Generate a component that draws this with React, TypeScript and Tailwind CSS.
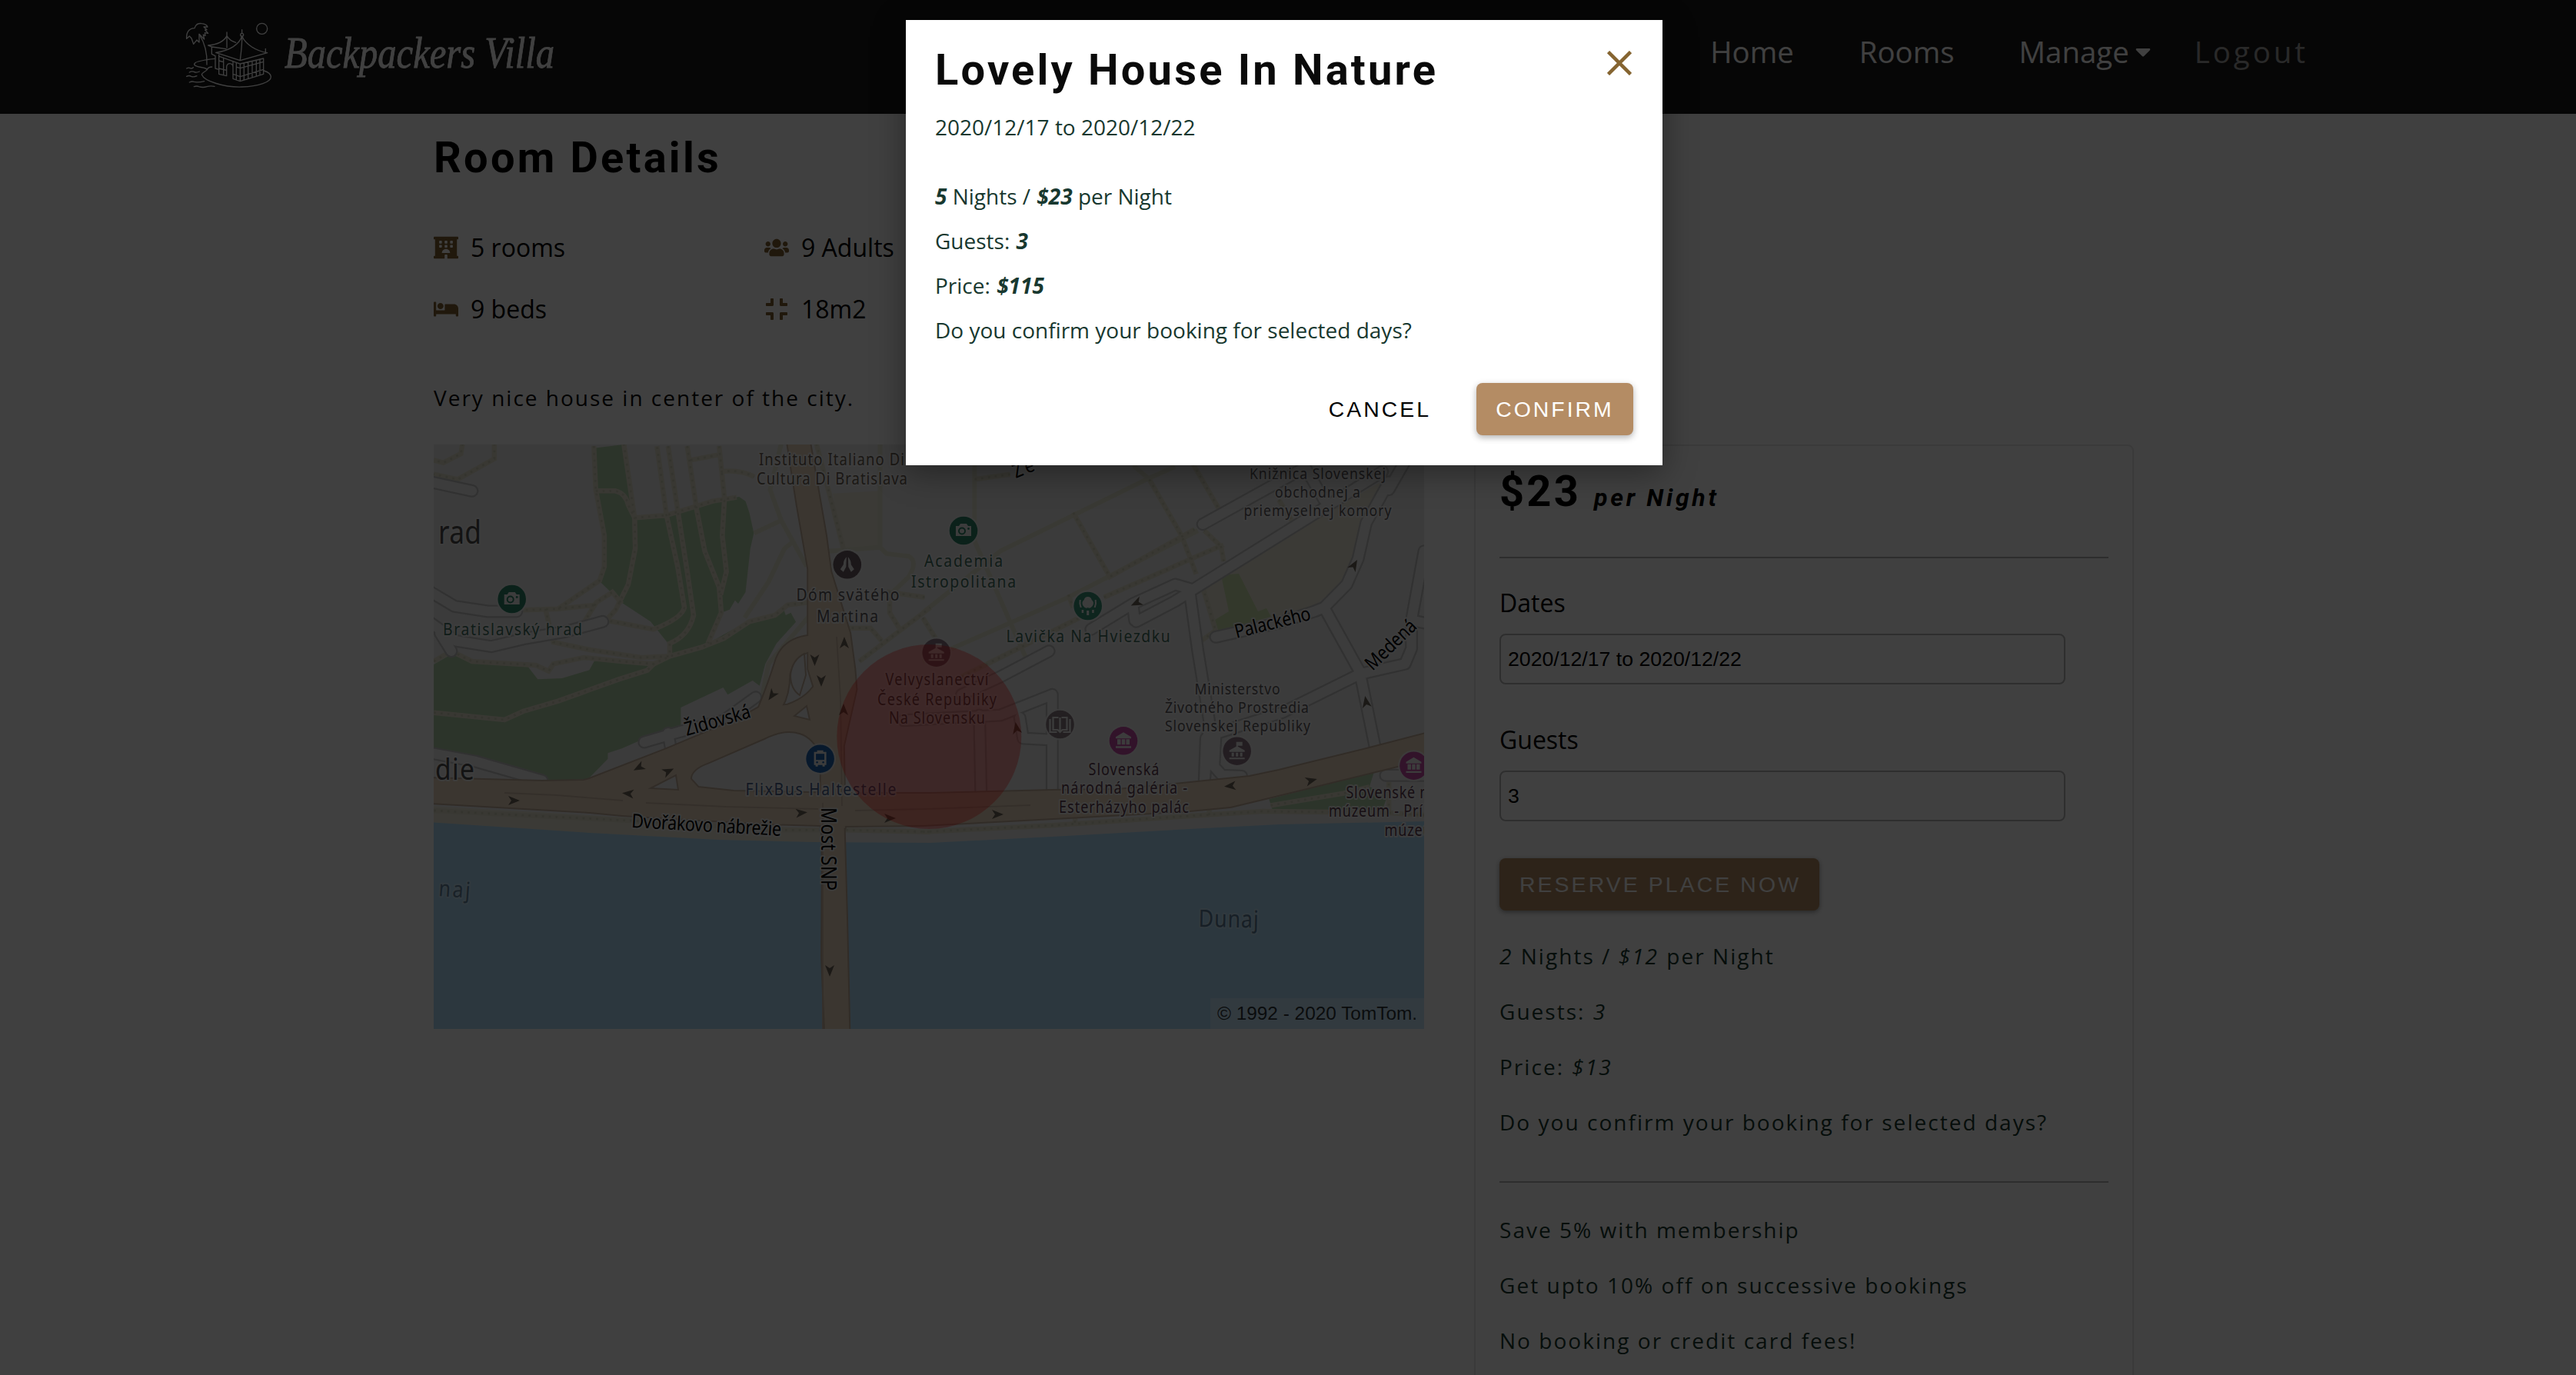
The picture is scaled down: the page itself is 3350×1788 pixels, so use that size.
import React from "react";
import { FaBed, FaCaretDown, FaCompress, FaHotel, FaUsers } from "react-icons/fa";

/* ---------- logo ---------- */

function VillaLogo() {
  return (
    <svg
      viewBox="60 85 345 260"
      className="h-[86.7px] w-[115px] shrink-0"
      fill="none"
      stroke="#fff"
      strokeWidth="4"
      strokeLinecap="round"
      strokeLinejoin="round"
    >
      <circle cx="362" cy="113" r="21" />
      <path d="M68 152 C66 128 76 112 99 111 C103 97 114 91 127 93 C139 94 147 99 150 106 L135 106 L147 117 L140 118 L152 131 L139 129 L141 140 L133 136 L137 154 L117 134 L117 166 L108 157 L95 173 L87 150 L79 142 Z" />
      <path d="M118 136 C137 165 149 205 147 253" />
      <path d="M225 127 V187 M225 141 C214 162 190 175 152 178 L168 184 L222 192 M225 141 C233 154 245 163 260 167 M166 184 V212 L180 219 V268 L194 272" />
      <path d="M284 117 V131 M284 142 C273 175 236 199 182 206 L277 237 L383 207 C338 199 299 175 284 142 C285 176 280 208 277 235 M376 191 V205" />
      <circle cx="284" cy="137" r="6" />
      <path d="M194 215 V290 L224 297 V262 C224 244 249 244 249 264 V308 L277 318 L368 290 V229 L277 250 L194 220 M277 250 V318 M262 247 V313 M249 240 V262 M212 226 V294 M194 238 L212 243 M194 268 L224 275 M249 290 L277 300 L368 272 M262 262 L277 267 L368 242 M292 247 V313 M308 244 V308 M324 240 V303 M340 236 V298 M354 232 V293" />
      <path d="M178 230 C140 234 97 241 98 252 C99 266 146 261 148 273 C139 283 127 284 127 292 C137 318 215 342 283 340 C350 338 398 320 397 300 C396 289 383 281 370 277 M148 273 C151 265 158 262 167 262" />
      <path d="M68 268 Q76 263 82 267 Q88 270 94 264 M79 283 Q88 277 97 281 Q106 286 118 280 M68 299 Q78 294 86 299 Q96 303 108 297 M79 322 Q89 317 97 320 Q112 324 137 318 M97 339 Q108 335 116 339 Q132 344 147 339 Q160 335 177 338" />
    </svg>
  );
}

/* ---------- map ---------- */

// Each map tile is drawn in its own grid and placed with one of these transforms.
const TILE_NW = "translate(-4 -8) scale(0.41454 0.33333)";
const TILE_NE = "translate(636 -8) scale(0.4209 0.33333)";
const TILE_SW = "translate(-4 382) scale(0.41454 0.33333)";
const TILE_SE = "translate(636 382) scale(0.4209 0.33333)";

type TilePath = [string, string];

const parks: TilePath[] = [
  [TILE_NW, "M512 38 L606 24 L630 240 L640 318 L740 305 L885 245 L968 228 L988 245 L1000 290 L1014 370 L1003 430 L988 600 L965 645 L955 632 L938 668 L912 680 L868 800 L750 850 L748 805 L690 715 L598 640 L528 555 L550 490 L550 380 L528 290 L518 200 Z"],
  [TILE_NW, "M10 882 L65 842 L130 872 L305 890 L336 940 L412 936 L498 904 L514 868 L690 886 L870 800 L985 720 L1070 700 L1108 668 L1114 690 L1130 680 L1146 716 L1085 800 L1050 880 L1032 965 L1010 945 L932 1000 L918 972 L785 1050 L785 1130 L655 1180 L600 1210 L556 1228 L556 1250 L495 1328 L350 1338 L140 1270 L10 1230 Z"],
  [TILE_SE, "M1070 238 L1395 130 L1380 190 L1440 210 L1420 280 L1080 278 Z"],
];

const lawns: TilePath[] = [
  [TILE_NW, "M1262 215 L1410 205 L1410 420 L1290 440 Z"],
  [TILE_NE, "M860 570 L1200 330 L1415 170 L1370 330 L1325 470 L1290 570 L1210 655 L1080 700 L905 750 Z"],
];

const footpaths: TilePath[] = [
  [TILE_NW, "M100 20 L95 60 L40 95 L10 85 M200 20 L200 80 L85 160 L10 140"],
  [TILE_NW, "M512 30 L518 200 L545 380 L545 500 L530 555 L400 665 L290 670"],
  [TILE_NW, "M518 205 L580 205 Q612 215 620 260 L640 310 L740 300 L885 245 L960 230 M606 20 L640 310 L642 430 L620 570 L580 670 L550 710 L700 745 Q790 700 796 660 L775 500 L740 300 L710 30"],
  [TILE_NW, "M745 30 L775 280 L805 520 L825 690 Q810 770 750 800 L750 850 M805 30 L835 280 L860 440 L905 580 L912 680 L870 800 M905 30 L922 235 L915 380 L928 520 L910 610 M815 85 L900 65 M910 130 Q970 120 1015 150"],
  [TILE_NW, "M10 870 L65 830 L130 870 L330 885 L370 908 L385 880 L480 855 L600 870 L700 880 L750 850 L850 815 L920 780 L1000 715 L1080 690 L1120 650 L1185 640"],
  [TILE_NW, "M360 665 L385 795 L500 825 L660 855 L750 850 M480 720 L520 640 L570 600 L600 645 M400 665 L520 650"],
  [TILE_NW, "M10 1070 L232 1098 L290 1065 L400 1025 L590 940 L680 905 L700 880"],
  [TILE_NW, "M1210 20 L1260 260 L1295 430"],
  [TILE_NW, "M1550 620 L1440 600 L1440 680 L1470 740 M1300 740 L1380 740 L1415 790 M1345 870 L1568 660"],
  [TILE_NE, "M160 160 L270 140 M835 100 L915 275 M465 290 L578 540 L840 355 M700 160 L800 380 L845 530 M560 620 L920 420 L870 360 M930 480 L920 410 M865 580 L905 750 L860 790 M450 610 L465 660 M0 700 L40 780"],
  [TILE_NE, "M1100 240 L1140 320 M120 930 L500 690"],
  [TILE_SW, "M10 282 L250 298 L640 322 L1100 358 L1300 358 L1568 365"],
  [TILE_SE, "M0 365 L400 340 L800 305 L1050 285 L1430 290 L1549 300 M470 330 L472 300 M885 300 L885 270 M1075 262 L1300 215 L1380 190 M1440 290 L1440 170"],
];

const plainPaths: TilePath[] = [
  [TILE_NW, "M1100 20 L1065 200 L1100 320 L1180 500 M1015 370 L1100 320 M1135 405 L1110 430 L1060 560 L985 700 M1410 20 L1410 420 M1250 440 L1410 425 L1430 450 L1500 460 Q1530 480 1500 540 L1450 600 M1190 690 L1060 880 L1040 1010"],
  [TILE_NE, "M160 100 L160 400 L320 860 M0 680 L240 440 L700 155 L780 110 M650 105 L700 160 M0 870 L450 620 L850 360"],
];

const streets: TilePath[] = [
  [TILE_NW, "M0 170 L130 205"],
  [TILE_NW, "M0 600 L75 655 L180 675 L270 675"],
  [TILE_NW, "M0 720 L80 790 L190 812 L300 780 L420 755 L540 715 M30 760 L65 830"],
  [TILE_NE, "M865 335 L1180 115 M835 590 L1420 130 M1440 200 L1490 90 M1180 110 L1240 240 M835 590 L780 570 L650 645 L520 745 M825 600 L780 635 L660 715 M650 660 L655 710"],
  [TILE_NE, "M825 600 L850 830 L885 1100 L870 1350 M905 775 L1100 720 L1210 675 L1240 660 L1310 570 L1345 470 L1370 330 L1440 170 M1240 660 L1350 910 L1400 1220 M1350 920 L1110 1070 L910 1150 M1350 920 L1490 880 L1510 820 L1510 710 L1549 720 M1510 710 L1549 440"],
  [TILE_NE, "M390 830 L240 930 L120 1000 M400 1000 L240 1080 L-60 1100 M400 1000 L400 1380 M300 1090 L310 1170 L385 1175 M175 1080 L180 1380"],
  [TILE_SE, "M875 0 L870 170 M905 -5 L900 110 L925 145 L985 148 M1430 145 L1549 145"],
  [TILE_NW, "M670 1185 L780 1145 L920 1100 L1020 1010 M745 1150 L755 1220"],
  [TILE_SW, "M10 60 L140 90 L350 165"],
];

const avenues: TilePath[] = [
  [TILE_NW, "M1120 20 L1150 260 L1185 510 L1185 900 L1205 980 L1225 1250 L1225 1520 L1300 1520 L1295 1200 L1335 980 L1330 900 L1315 760 L1280 620 L1255 520 L1240 380 L1215 200 L1190 20 Z"],
  [TILE_SW, "M1225 190 L1230 500 L1228 850 L1237 1140 L1313 1140 L1305 700 L1297 350 L1297 190 Z"],
  [TILE_NW, "M1190 770 Q1110 780 1085 860 Q1060 960 1030 1050 L1030 1110 L1100 1050 Q1125 1000 1125 920 Q1140 850 1190 830 Z"],
  [TILE_NW, "M1215 940 Q1190 1010 1120 1040 L1030 1050 L970 1092 L740 1212 L500 1328 L480 1400 L815 1400 L815 1330 Q815 1290 870 1265 L1050 1168 Q1110 1130 1160 1150 Q1200 1165 1230 1240 L1240 1000 Z"],
  [
    "",
    "M-6 434 L141 438 L195 437 L203 435 L334 435 L344 446 L390 451 L535 454 L646 454 L804 450 L889 449 L964 442 L1061 432 L1099 424 L1217 395 L1294 375 L1294 408 L1225 425 L1082 460 L1036 471 L973 477 L825 485 L636 495 L535 496 L431 493 L245 482 L203 478 L-6 466 Z",
  ],
];

const arrows: [number, number, number][] = [
  [534, 258, -90], [495.5, 280, 90], [504, 307, 90], [440, 326, 125], [533, 345, -90],
  [914, 206, 155], [1197, 157, -60], [1212.6, 335, -100], [758, 369, -100],
  [267, 420, 152], [305, 425, -25], [253, 454, 185], [104, 463, 0], [478, 479, -5],
  [593, 486, 0], [515, 684, 90], [1036, 444, 175], [1141, 437, -15], [733, 481, 0],
];

interface Label {
  text: string;
  x: number;
  y: number;
  w: number;
  size: number;
  fill: string;
  rotate?: number;
}

const GREEN = "#42705f";
const GREY = "#5e5a5e";
const PLUM = "#5c3c50";

// Horizontal squeeze that turns the regular face into a condensed one.
const CONDENSE = 0.86;

const labels: Label[] = [
  { text: "rad", x: 6, y: 129, w: 56, size: 41, fill: "#4c4c4c" },
  { text: "die", x: 2, y: 436, w: 51, size: 39, fill: "#4c4c4c" },
  { text: "Instituto Italiano Di", x: 423, y: 27, w: 189, size: 21.5, fill: "#6c6054" },
  { text: "Cultura Di Bratislava", x: 420, y: 52, w: 196, size: 21.5, fill: "#6c6054" },
  { text: "Bratislavský hrad", x: 12, y: 248, w: 181, size: 22.5, fill: GREEN },
  { text: "Dóm svätého", x: 471.5, y: 203, w: 134, size: 22.5, fill: GREY },
  { text: "Martina", x: 498, y: 231, w: 80, size: 22.5, fill: GREY },
  { text: "Academia", x: 638, y: 159, w: 102, size: 22.5, fill: GREEN },
  { text: "Istropolitana", x: 621, y: 186, w: 136, size: 22.5, fill: GREEN },
  { text: "Lavička Na Hviezdku", x: 744.6, y: 257, w: 213, size: 22.5, fill: GREEN },
  { text: "Knižnica Slovenskej", x: 1061, y: 44.7, w: 177, size: 20.5, fill: GREY },
  { text: "obchodnej a", x: 1094, y: 69, w: 111, size: 20.5, fill: GREY },
  { text: "priemyselnej komory", x: 1053.5, y: 93, w: 192, size: 20.5, fill: GREY },
  { text: "Ministerstvo", x: 989.6, y: 325, w: 111, size: 20.5, fill: GREY },
  { text: "Životného Prostredia", x: 951, y: 349, w: 187, size: 20.5, fill: GREY },
  { text: "Slovenskej Republiky", x: 951, y: 373, w: 189, size: 20.5, fill: GREY },
  { text: "Velvyslanectví", x: 587.5, y: 313, w: 134, size: 21, fill: GREY },
  { text: "České Republiky", x: 577, y: 338.7, w: 155, size: 21, fill: GREY },
  { text: "Na Slovensku", x: 592, y: 363, w: 125, size: 21, fill: GREY },
  { text: "Slovenská", x: 851.5, y: 429.7, w: 92, size: 21, fill: PLUM },
  { text: "národná galéria -", x: 816, y: 453.7, w: 164, size: 21, fill: PLUM },
  { text: "Esterházyho palác", x: 813, y: 478.7, w: 169, size: 21, fill: PLUM },
  { text: "Slovenské n", x: 1186.5, y: 460, w: 107, size: 21, fill: PLUM },
  { text: "múzeum - Prí", x: 1164, y: 484, w: 122, size: 21, fill: PLUM },
  { text: "múzeu", x: 1236.6, y: 508.7, w: 61, size: 21, fill: PLUM },
  { text: "FlixBus Haltestelle", x: 405.5, y: 456, w: 196, size: 22.5, fill: "#48608c" },
  { text: "naj", x: 6, y: 587, w: 41, size: 29, fill: "#64829c", rotate: 4 },
  { text: "Dunaj", x: 994.6, y: 627, w: 78, size: 31, fill: "#5c7c98", rotate: 1 },
  { text: "Ze", x: 757, y: 44, w: 28, size: 25, fill: "#000", rotate: -22 },
  { text: "Židovská", x: 329, y: 379, w: 88, size: 25, fill: "#000", rotate: -16 },
  { text: "Palackého", x: 1044, y: 252, w: 101, size: 25, fill: "#000", rotate: -14 },
  { text: "Medená", x: 1221, y: 295, w: 82, size: 25, fill: "#000", rotate: -44 },
  { text: "Dvořákovo nábrežie", x: 257, y: 498, w: 195, size: 25, fill: "#000", rotate: 3.2 },
  { text: "Most SNP", x: 504, y: 472, w: 108, size: 27, fill: "#000", rotate: 90 },
];

type PinKind = "camera" | "church" | "tree" | "gov" | "museum" | "book" | "bus";

const pins: { x: number; y: number; fill: string; kind: PinKind }[] = [
  { x: 101.7, y: 201, fill: "#2c8468", kind: "camera" },
  { x: 689, y: 112, fill: "#2c8468", kind: "camera" },
  { x: 850.7, y: 210, fill: "#38947a", kind: "tree" },
  { x: 537.8, y: 156.3, fill: "#6c5c64", kind: "church" },
  { x: 653.7, y: 270.7, fill: "#8c7484", kind: "gov" },
  { x: 814.5, y: 364, fill: "#8c7c84", kind: "book" },
  { x: 1044.7, y: 398.7, fill: "#8c7484", kind: "gov" },
  { x: 897, y: 385.3, fill: "#c84ca8", kind: "museum" },
  { x: 1274.5, y: 417.7, fill: "#c84ca8", kind: "museum" },
  { x: 502.6, y: 408.7, fill: "#2064b0", kind: "bus" },
];

function PinGlyph({ kind, hole }: { kind: PinKind; hole: string }) {
  switch (kind) {
    case "camera":
      return (
        <g>
          <path d="M-10 -6 h4 l2 -3 h8 l2 3 h4 v13 h-20 z" />
          <circle cx="-2" cy="0.5" r="4" fill="none" stroke={hole} strokeWidth="2" />
          <circle cx="6.5" cy="-2.5" r="1.4" fill={hole} />
        </g>
      );
    case "church":
      return (
        <g>
          <path d="M-1 -10 Q-5 -6 -5 0 L-9 6 L-5 9.5 L-1.5 3 Z M1 -10 Q5 -6 5 0 L9 6 L5 9.5 L1.5 3 Z" />
          <path d="M0 -5 V4" stroke={hole} strokeWidth="1.4" />
        </g>
      );
    case "tree":
      return (
        <path d="M-6 0 q-3 -5 1 -8 q1 -4 5 -4 q4 0 5 4 q4 3 1 8 q-3 4 -6 2 q-3 2 -6 -2 z M-1.5 6 h3 v6 h-3 z M-8 5 h2.5 v4 h-2.5 z M5.5 5 h2.5 v4 h-2.5 z M-11 -8 h2 q-1 5 1 10 h-2 q-2 -5 -1 -10 z M11 -8 h-2 q1 5 -1 10 h2 q2 -5 1 -10 z" />
      );
    case "gov":
      return (
        <path d="M-10 -1 L-1 -6 V-12 H7 V-7 H1 V-6 L10 -1 V1 H-10 Z M-7 2 h3 v5 h-3 z M-1.5 2 h3 v5 h-3 z M4 2 h3 v5 h-3 z M-10 8.5 h20 v2 h-20 z" />
      );
    case "museum":
      return (
        <path d="M-10 -5 L0 -11 L10 -5 V-3 H-10 Z M-8 -2 h4.5 v7 h-4.5 z M-2.2 -2 h4.4 v7 h-4.4 z M3.5 -2 h4.5 v7 h-4.5 z M-10 7 h20 v2.4 h-20 z" />
      );
    case "book":
      return (
        <path
          fill="none"
          stroke="#f0f0f0"
          strokeWidth="2.2"
          d="M0 8 V-9 M-2 -9 H-9 V7 H-3 L0 10 L3 7 H9 V-9 H2 M-13 -7 V10 H-4 M13 -7 V10 H4"
        />
      );
    case "bus":
      return (
        <g>
          <path d="M-4 -11 h8 v2 h4 v17 h-2 v2 h-3 v-2 h-6 v2 h-3 v-2 h-2 v-17 h4 z" />
          <path d="M-5.5 -6.5 h11 v8 h-11 z" fill={hole} />
          <circle cx="-4" cy="4.5" r="1.3" fill={hole} />
          <circle cx="4" cy="4.5" r="1.3" fill={hole} />
        </g>
      );
  }
}

function Paths({ items, ...rest }: { items: TilePath[] } & React.SVGProps<SVGPathElement>) {
  return (
    <>
      {items.map(([t, d], i) => (
        <path key={i} d={d} transform={t || undefined} vectorEffect="non-scaling-stroke" {...rest} />
      ))}
    </>
  );
}

function CityMap() {
  return (
    <div className="relative h-[760px] w-[1288px] shrink-0 overflow-hidden">
      <svg viewBox="0 0 1288 760" className="block h-[760px] w-[1288px]">
        <rect width="1288" height="760" fill="#ebebeb" />
        <Paths items={parks} fill="#b0d0a6" />
        <Paths items={lawns} fill="#ebe6d6" />
        <path d="M1024 170 L1047 168 L1072 217 L1083 213 L1089 224 L1020 242 L1016 228 L1034 217 Z" fill="#cbe0ac" />
        <path d="M-6 470 L203 482 L535 502 L535 520 L203 508 L-6 494 Z" fill="#ebe8d8" />
        <path d="M-6 491 L203 505 L370 514 L493 517 L646 518 L804 510 L1002 499 L1099 494 L1294 490 V766 H-6 Z" fill="#b0dcf8" />
        <Paths items={plainPaths} fill="none" stroke="#e4e4ce" strokeWidth={6} />
        <Paths items={footpaths} fill="none" stroke="#e2e0cc" strokeWidth={6.5} />
        <Paths items={footpaths} fill="none" stroke="#cfcdb8" strokeWidth={2.8} strokeDasharray="2.8 6" />
        <Paths items={streets} fill="none" stroke="#c4c4c4" strokeWidth={17} strokeLinecap="round" strokeLinejoin="round" />
        <Paths items={streets} fill="none" stroke="#eeeeee" strokeWidth={12.5} strokeLinecap="round" strokeLinejoin="round" />
        <Paths items={avenues} fill="none" stroke="#c4b09c" strokeWidth={4} strokeLinejoin="round" />
        <Paths items={avenues} fill="#ecd6be" />
        <path d="M282 447 L315 430 L318 449 Z M469 353 L485 340 L489 358 Z M464 300 Q466 280 482 272 L484 300 L476 326 Q464 318 464 300 Z" fill="#ebebeb" stroke="#c4b09c" strokeWidth="2" />
        <path d="M92 453 L160 456 L246 463 M276 466 L380 471 L500 474 M548 476 L640 474 L776 469 M506 466 V760 M524 250 L529 330 L531 470" fill="none" stroke="#d0bca8" strokeWidth="1.8" />
        <g fill="#6c6459">
          {arrows.map(([x, y, a], i) => (
            <path key={i} d="M-7 -6 L8 0 L-7 6 L-3 0 Z" transform={`translate(${x} ${y}) rotate(${a})`} />
          ))}
        </g>
        <g fontFamily='"Noto Sans", sans-serif'>
          {labels.map((l) => (
            <text
              key={l.text + l.x}
              transform={`translate(${l.x} ${l.y}) rotate(${l.rotate ?? 0}) scale(${CONDENSE} 1)`}
              fontSize={l.size}
              fill={l.fill}
              stroke="#f6f6f6"
              strokeOpacity={l.text.endsWith("naj") ? 0.3 : 0.9}
              strokeWidth="4"
              strokeLinejoin="round"
              paintOrder="stroke"
              textLength={l.w / CONDENSE}
              lengthAdjust="spacing"
            >
              {l.text}
            </text>
          ))}
        </g>
        {pins.map((p, i) => (
          <g key={i} transform={`translate(${p.x} ${p.y})`} fill="#f0f0f0">
            <circle r="20.5" fillOpacity="0.8" />
            <circle r="18.3" fill={p.fill} />
            <PinGlyph kind={p.kind} hole={p.fill} />
          </g>
        ))}
        <circle cx="644.3" cy="380" r="120" fill="#ff0000" fillOpacity="0.33" />
      </svg>
      <div className="absolute right-0 bottom-0 flex h-10 w-[278px] items-center justify-center bg-white/30 font-['Liberation_Sans',sans-serif] text-[24.4px] whitespace-nowrap text-black/80">
        © 1992 - 2020 TomTom.
      </div>
    </div>
  );
}

/* ---------- page ---------- */

function Feature({ icon, children }: { icon: React.ReactNode; children: React.ReactNode }) {
  return (
    <div className="flex h-10 items-center gap-4 text-[32px] leading-10 text-black">
      <span className="text-[#806232]">{icon}</span>
      <span>{children}</span>
    </div>
  );
}

function Field({ label, value }: { label: string; value: string }) {
  return (
    <div>
      <div className="text-[32px] leading-[44px] text-black">{label}</div>
      <div className="mt-[18px] flex h-[66px] w-[736px] items-center rounded-[8px] border-2 border-[#b8b8b8] pl-[9px] font-['Liberation_Sans',sans-serif] text-[26.67px] text-black">
        {value}
      </div>
    </div>
  );
}

function Header() {
  return (
    <header className="flex h-[148px] bg-[#1a1a1a] pl-[240px] text-white">
      <div className="flex pt-[28px]">
        <VillaLogo />
        <svg className="ml-[13px] h-[90px] w-[370px] overflow-visible" viewBox="0 0 370 90">
          <text
            x="2"
            y="60"
            fill="#fff"
            stroke="#fff"
            strokeWidth="0.8"
            fontFamily='"Liberation Serif", serif'
            fontStyle="italic"
            fontSize="56"
            textLength="351"
            lengthAdjust="spacingAndGlyphs"
          >
            Backpackers Villa
          </text>
        </svg>
      </div>
      <nav className="mr-[348px] ml-auto flex h-[134px] items-center text-[38.4px] leading-none">
        <a className="mr-[85px]">Home</a>
        <a className="mr-[84px]">Rooms</a>
        <a className="flex items-center">
          Manage
          <FaCaretDown className="ml-[2px] size-[32px]" />
        </a>
        <a className="ml-[51px] tracking-[4px] text-[#a4a4a4]">Logout</a>
      </nav>
    </header>
  );
}

function BookingCard() {
  return (
    <aside className="ml-[65px] h-[1400px] w-[858px] shrink-0 rounded-[8px] border-2 border-[#e6e6e6] px-[31px] pt-[27px]">
      <h2 className="h-16 font-['Roboto',sans-serif] text-[56px] leading-[64px] font-bold tracking-[3.2px] text-black">
        $23 <em className="text-[32px] leading-none tracking-[3.7px]">per Night</em>
      </h2>
      <hr className="mt-[53px] h-[2px] border-0 bg-[#b4b4b4]" />
      <div className="mt-[36px] flex flex-col gap-[50px]">
        <Field label="Dates" value="2020/12/17 to 2020/12/22" />
        <Field label="Guests" value="3" />
      </div>
      <button className="mt-[48px] flex h-[68px] w-[416px] items-center justify-center rounded-[8px] bg-[#b48c64] pl-[2px] font-['Liberation_Sans',sans-serif] text-[28.4px] tracking-[3.1px] text-white shadow-[0_2px_6px_rgba(0,0,0,0.4)]">
        RESERVE PLACE NOW
      </button>
      <div className="mt-[23px] text-[28px] leading-[72px] tracking-[2.03px] whitespace-nowrap text-[#18382f]">
        <p>
          <em className="mr-[1px]">2</em> Nights / <em className="mr-[1px]">$12</em> per Night
        </p>
        <p>
          Guests: <em className="ml-[1px]">3</em>
        </p>
        <p>
          Price: <em className="ml-[1px]">$13</em>
        </p>
        <p>Do you confirm your booking for selected days?</p>
        <hr className="mt-[41px] mb-[25px] h-[2px] border-0 bg-[#b4b4b4]" />
        <p>Save 5% with membership</p>
        <p>Get upto 10% off on successive bookings</p>
        <p>No booking or credit card fees!</p>
      </div>
    </aside>
  );
}

function BookingDialog() {
  return (
    <div className="absolute inset-0 flex items-start justify-center bg-black/75 pt-[26px]">
      <div
        role="dialog"
        className="relative -left-[5px] h-[579px] w-[984px] bg-white px-[38px] pt-[33px] text-[28px] text-[#18382f] shadow-[0_8px_40px_rgba(0,0,0,0.4)]"
      >
        <div className="flex justify-between">
          <h2 className="font-['Roboto',sans-serif] text-[56px] leading-[64px] font-bold tracking-[3.2px] text-[#0a0a0a]">
            Lovely House In Nature
          </h2>
          <svg viewBox="0 0 32 32" className="mt-[7px] mr-[2px] size-8" stroke="#856430" strokeWidth="4.5">
            <path d="M1.5 1.5 L30.5 30.5 M30.5 1.5 L1.5 30.5" />
          </svg>
        </div>
        <p className="mt-[13px] leading-[58px]">2020/12/17 to 2020/12/22</p>
        <div className="mt-[32px] leading-[58px]">
          <p>
            <em className="font-bold">5</em> Nights / <em className="ml-[1px] font-bold">$23</em> per Night
          </p>
          <p>
            Guests: <em className="ml-[1px] font-bold">3</em>
          </p>
          <p>
            Price: <em className="ml-[1px] font-bold">$115</em>
          </p>
          <p>Do you confirm your booking for selected days?</p>
        </div>
        <div className="mt-[40px] flex items-center justify-end font-['Liberation_Sans',sans-serif] text-[28.4px] tracking-[3px]">
          <button className="mr-[59px] text-black">CANCEL</button>
          <button className="flex h-[68px] w-[204px] items-center justify-center rounded-[8px] bg-[#b48c64] text-white shadow-[0_3px_8px_rgba(0,0,0,0.3)]">
            CONFIRM
          </button>
        </div>
      </div>
    </div>
  );
}

export default function App() {
  return (
    <div className="relative h-[1788px] w-[3350px] overflow-hidden bg-white font-['Open_Sans',sans-serif]">
      <Header />
      <main className="px-[564px] pt-[25px]">
        <h1 className="font-['Roboto',sans-serif] text-[56px] leading-[64px] font-bold tracking-[3.2px] text-black">
          Room Details
        </h1>
        <div className="mt-[65px] grid grid-cols-[430px_430px] gap-y-10">
          <Feature icon={<FaHotel />}>5 rooms</Feature>
          <Feature icon={<FaUsers />}>9 Adults</Feature>
          <Feature icon={<FaBed />}>9 beds</Feature>
          <Feature icon={<FaCompress />}>18m2</Feature>
        </div>
        <p className="mt-[75px] text-[28px] leading-10 tracking-[2px] text-[#0a0a0a]">
          Very nice house in center of the city.
        </p>
        <div className="mt-[41px] flex items-start">
          <CityMap />
          <BookingCard />
        </div>
      </main>
      <BookingDialog />
    </div>
  );
}
